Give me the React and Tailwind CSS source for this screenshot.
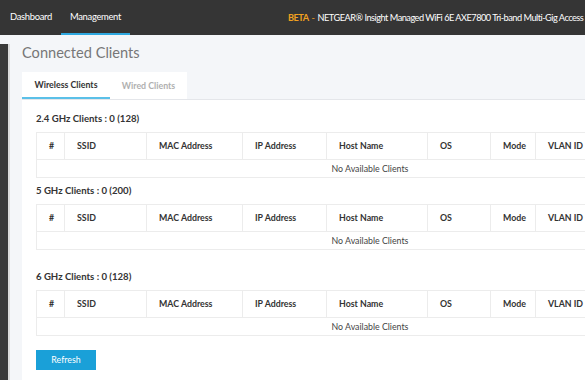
const columns = [
  { label: '#', width: 'w-[28px]', align: 'text-center' },
  { label: 'SSID', width: 'w-[82px]' },
  { label: 'MAC Address', width: 'w-[96px]' },
  { label: 'IP Address', width: 'w-[84px]' },
  { label: 'Host Name', width: 'w-[101px]' },
  { label: 'OS', width: 'w-[63px]' },
  { label: 'Mode', width: 'w-[45px]' },
  { label: 'VLAN ID', width: 'w-[80px]' },
];

const bands = [
  { name: '2.4 GHz Clients : 0 (128)', gap: 'mt-0' },
  { name: '5 GHz Clients : 0 (200)', gap: 'mt-[6px]' },
  { name: '6 GHz Clients : 0 (128)', gap: 'mt-[20px]' },
];

const ClientTable = () => (
  <table className="table-fixed border-collapse w-[579px] text-[8.8px]">
    <thead>
      <tr>
        {columns.map((col) => (
          <th
            key={col.label}
            className={`${col.width} ${col.align || 'text-left'} h-[27px] border border-[#ececec] px-3 font-bold text-[#333]`}
          >
            {col.label}
          </th>
        ))}
      </tr>
    </thead>
    <tbody>
      <tr>
        <td className="h-[18px] border-t border-b border-l border-[#ececec]" colSpan={4}></td>
        <td className="h-[18px] border-t border-b border-[#ececec] px-[5px] text-[#444]" colSpan={4}>
          No Available Clients
        </td>
      </tr>
    </tbody>
  </table>
);

const App = () => {
  return (
    <div className="w-[585px] h-[380px] overflow-hidden bg-[#f4f6f9] font-['Lato',sans-serif]">
      <div className="h-[35px] bg-[#353535] flex items-stretch text-[9.4px] tracking-[-0.3px] text-white whitespace-nowrap overflow-hidden">
        <div className="shrink-0 flex items-center w-[61px] pl-[10px]">Dashboard</div>
        <div className="shrink-0 flex items-center w-[69px] justify-center border-b-[2px] border-[#2ea8e0] pt-[2px]">Management</div>
        <div className="shrink-0 flex items-center ml-[158px] text-[9.2px] tracking-[-0.5px]">
          <span className="text-[#f0a020] font-bold">BETA</span>
          <span className="text-[#f0a020] mx-[3px]">-</span>
          <span>NETGEAR® Insight Managed WiFi 6E AXE7800 Tri-band Multi-Gig Access Point</span>
        </div>
      </div>
      <div className="flex h-[345px]">
        <div className="w-[10px] mt-[9px] bg-[#3a3a3a] border-r-[2px] border-[#dcdcdc]"></div>
        <div className="flex-1 pl-[12px] overflow-hidden">
          <h1 className="text-[14.6px] text-[#777] mt-[8px] leading-[20px]">Connected Clients</h1>
          <div className="mt-[9px] flex">
            <div className="bg-white flex text-[8.8px] font-bold">
              <div className="w-[88px] h-[27px] flex items-center justify-center text-[#333] border-b-[2px] border-[#5bc0e8]">
                Wireless Clients
              </div>
              <div className="w-[77px] h-[27px] flex items-center justify-center text-[#b0b0b0]">
                Wired Clients
              </div>
            </div>
          </div>
          <div className="bg-white border-t border-[#e4e6ea] h-[300px] pl-[14px] pt-[12px]">
            {bands.map((band) => (
              <div key={band.name} className={band.gap}>
                <div className="text-[9.6px] font-bold text-[#333] leading-[14px] mb-[6px]">{band.name}</div>
                <ClientTable />
              </div>
            ))}
            <button className="mt-[14px] w-[60px] h-[20px] bg-[#1aa0d8] text-white text-[8.8px]">Refresh</button>
          </div>
        </div>
      </div>
    </div>
  );
};

export default App;
